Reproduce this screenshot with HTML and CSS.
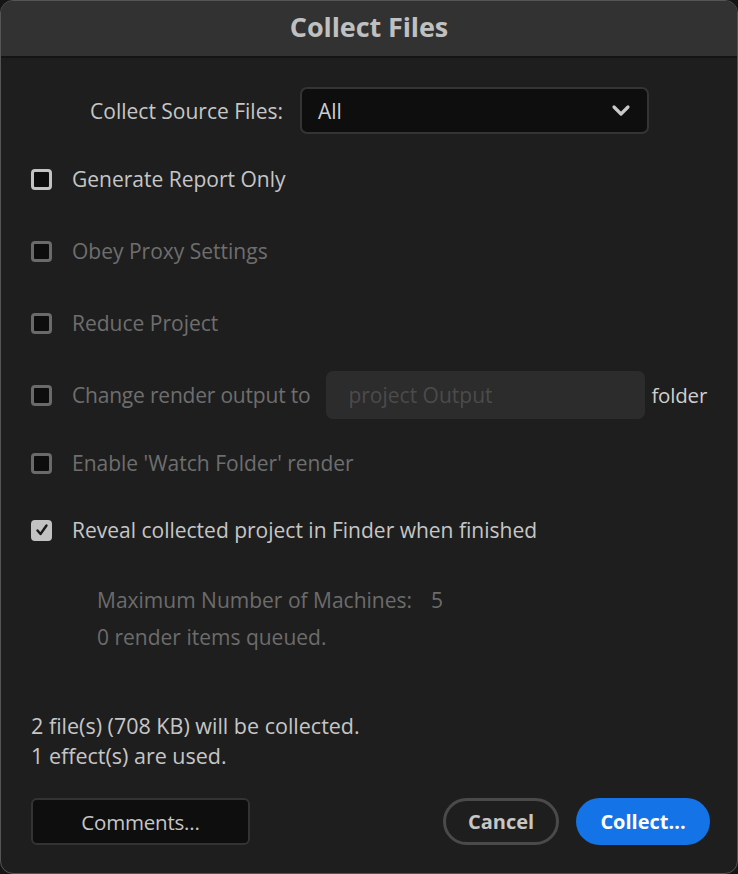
FILE: index.html
```html
<!DOCTYPE html>
<html>
<head>
<meta charset="utf-8">
<link rel="stylesheet" href="styles.css">
</head>
<body>
<div class="dialog">
  <div class="titlebar">Collect Files</div>
  <div class="content">
    <div class="source-row">
      <span class="label">Collect Source Files:</span>
      <div class="select">
        <span>All</span>
        <svg class="chev" width="20" height="14" viewBox="0 0 20 14"><path d="M3 3 L10 10 L17 3" fill="none" stroke="#c8c8c8" stroke-width="3.2" stroke-linecap="round" stroke-linejoin="round"/></svg>
      </div>
    </div>

    <div class="row r1"><span class="cb"></span><span class="text">Generate Report Only</span></div>
    <div class="row r2 disabled"><span class="cb"></span><span class="text">Obey Proxy Settings</span></div>
    <div class="row r3 disabled"><span class="cb"></span><span class="text">Reduce Project</span></div>
    <div class="row r4 disabled"><span class="cb"></span><span class="text">Change render output to</span><div class="textfield">project Output</div><span class="folder">folder</span></div>
    <div class="row r5 disabled"><span class="cb"></span><span class="text">Enable 'Watch Folder' render</span></div>
    <div class="row r6"><span class="cb checked"><svg width="14" height="14" viewBox="0 0 14 14"><path d="M2.5 7.5 L5.5 11 L11.5 2.5" fill="none" stroke="#1a1a1a" stroke-width="2.4" stroke-linecap="round" stroke-linejoin="round"/></svg></span><span class="text">Reveal collected project in Finder when finished</span></div>

    <div class="watch">
      <div class="machines"><span>Maximum Number of Machines:</span><span class="num">5</span></div>
      <div class="queued">0 render items queued.</div>
    </div>

    <div class="spacer"></div>

    <div class="summary">
      <div>2 file(s) (708 KB) will be collected.</div>
      <div>1 effect(s) are used.</div>
    </div>

    <div class="footer">
      <button class="btn comments">Comments...</button>
      <div class="right">
        <button class="btn cancel">Cancel</button>
        <button class="btn collect">Collect...</button>
      </div>
    </div>
  </div>
</div>
</body>
</html>
```

FILE: styles.css
```css
* { box-sizing: border-box; }
html, body { margin: 0; padding: 0; }
body {
  background: #151515;
  font-family: "Open Sans", "Liberation Sans", sans-serif;
  width: 738px;
  height: 874px;
  overflow: hidden;
}
.dialog {
  width: 738px;
  height: 874px;
  border: 1px solid #555;
  border-radius: 13px;
  overflow: hidden;
  background: #1e1e1e;
  display: flex;
  flex-direction: column;
}
.titlebar {
  height: 57px;
  flex: none;
  background: #323232;
  border-bottom: 2px solid #141414;
  color: #c0c0c0;
  font-weight: 700;
  font-size: 27px;
  display: flex;
  align-items: center;
  justify-content: center;
  padding-bottom: 4px;
  letter-spacing: -0.1px;
}
.content {
  flex: 1;
  display: flex;
  flex-direction: column;
  padding: 29px 27px 28px 30px;
}
.source-row {
  display: flex;
  align-items: center;
  justify-content: flex-end;
  padding-right: 61px;
  height: 47px;
  gap: 17px;
}
.label {
  color: #c6c6c6;
  font-size: 21px;
}
.select {
  width: 349px;
  height: 47px;
  background: #0e0e0e;
  border: 2px solid #343434;
  border-radius: 7px;
  display: flex;
  align-items: center;
  justify-content: space-between;
  padding: 0 16px 0 16px;
  color: #cdcdcd;
  font-size: 21px;
}
.chev { margin-top: 1px; }
.row {
  display: flex;
  align-items: center;
  height: 48px;
  color: #c6c6c6;
  font-size: 21px;
  white-space: nowrap;
}
.text { flex: none; }
.r1 { margin-top: 21px; }
.r2, .r3, .r4 { margin-top: 24px; }
.r5 { margin-top: 20px; }
.r6 { margin-top: 19px; }
.row.disabled { color: #6e6e6e; }
.r4 .text { letter-spacing: -0.2px; }
.cb {
  width: 21px;
  height: 21px;
  border: 3px solid #c2c2c2;
  border-radius: 4px;
  background: #0d0d0d;
  margin-right: 20px;
  flex: none;
  display: flex;
  align-items: center;
  justify-content: center;
}
.disabled .cb { border-color: #6a6a6a; }
.cb.checked { background: #c2c2c2; border-color: #c2c2c2; }
.textfield {
  flex: none;
  margin-left: 16px;
  width: 319px;
  height: 48px;
  background: #2c2c2c;
  border-radius: 7px;
  color: #4b4b4b;
  display: flex;
  align-items: center;
  padding-left: 22px;
  font-size: 21px;
}
.folder {
  flex: none;
  color: #cfcfcf;
  margin-left: 6px;
  font-size: 20.5px;
  letter-spacing: -0.2px;
}
.watch {
  margin-top: 32px;
  padding-left: 66px;
  color: #6c6c6c;
  font-size: 21px;
}
.machines { display: flex; gap: 19px; height: 28px; align-items: center; }
.queued { margin-top: 9px; height: 28px; display: flex; align-items: center; }
.spacer { flex: 1; }
.summary {
  color: #c6c6c6;
  font-size: 21.5px;
  line-height: 30px;
}
.footer {
  margin-top: 27px;
  display: flex;
  justify-content: space-between;
  align-items: center;
}
.right { display: flex; gap: 17px; }
.btn {
  font-family: inherit;
  height: 47px;
  font-size: 20px;
  display: flex;
  align-items: center;
  justify-content: center;
  cursor: default;
}
.comments {
  width: 219px;
  background: #0e0e0e;
  border: 2px solid #333;
  border-radius: 6px;
  color: #c6c6c6;
  font-size: 20.5px;
  letter-spacing: -0.2px;
}
.cancel {
  width: 116px;
  background: transparent;
  border: 3px solid #4a4a4a;
  border-radius: 24px;
  color: #c6c6c6;
  font-weight: 700;
}
.collect {
  width: 134px;
  background: #1473e6;
  border: none;
  border-radius: 24px;
  color: #fff;
  font-weight: 700;
}
```
